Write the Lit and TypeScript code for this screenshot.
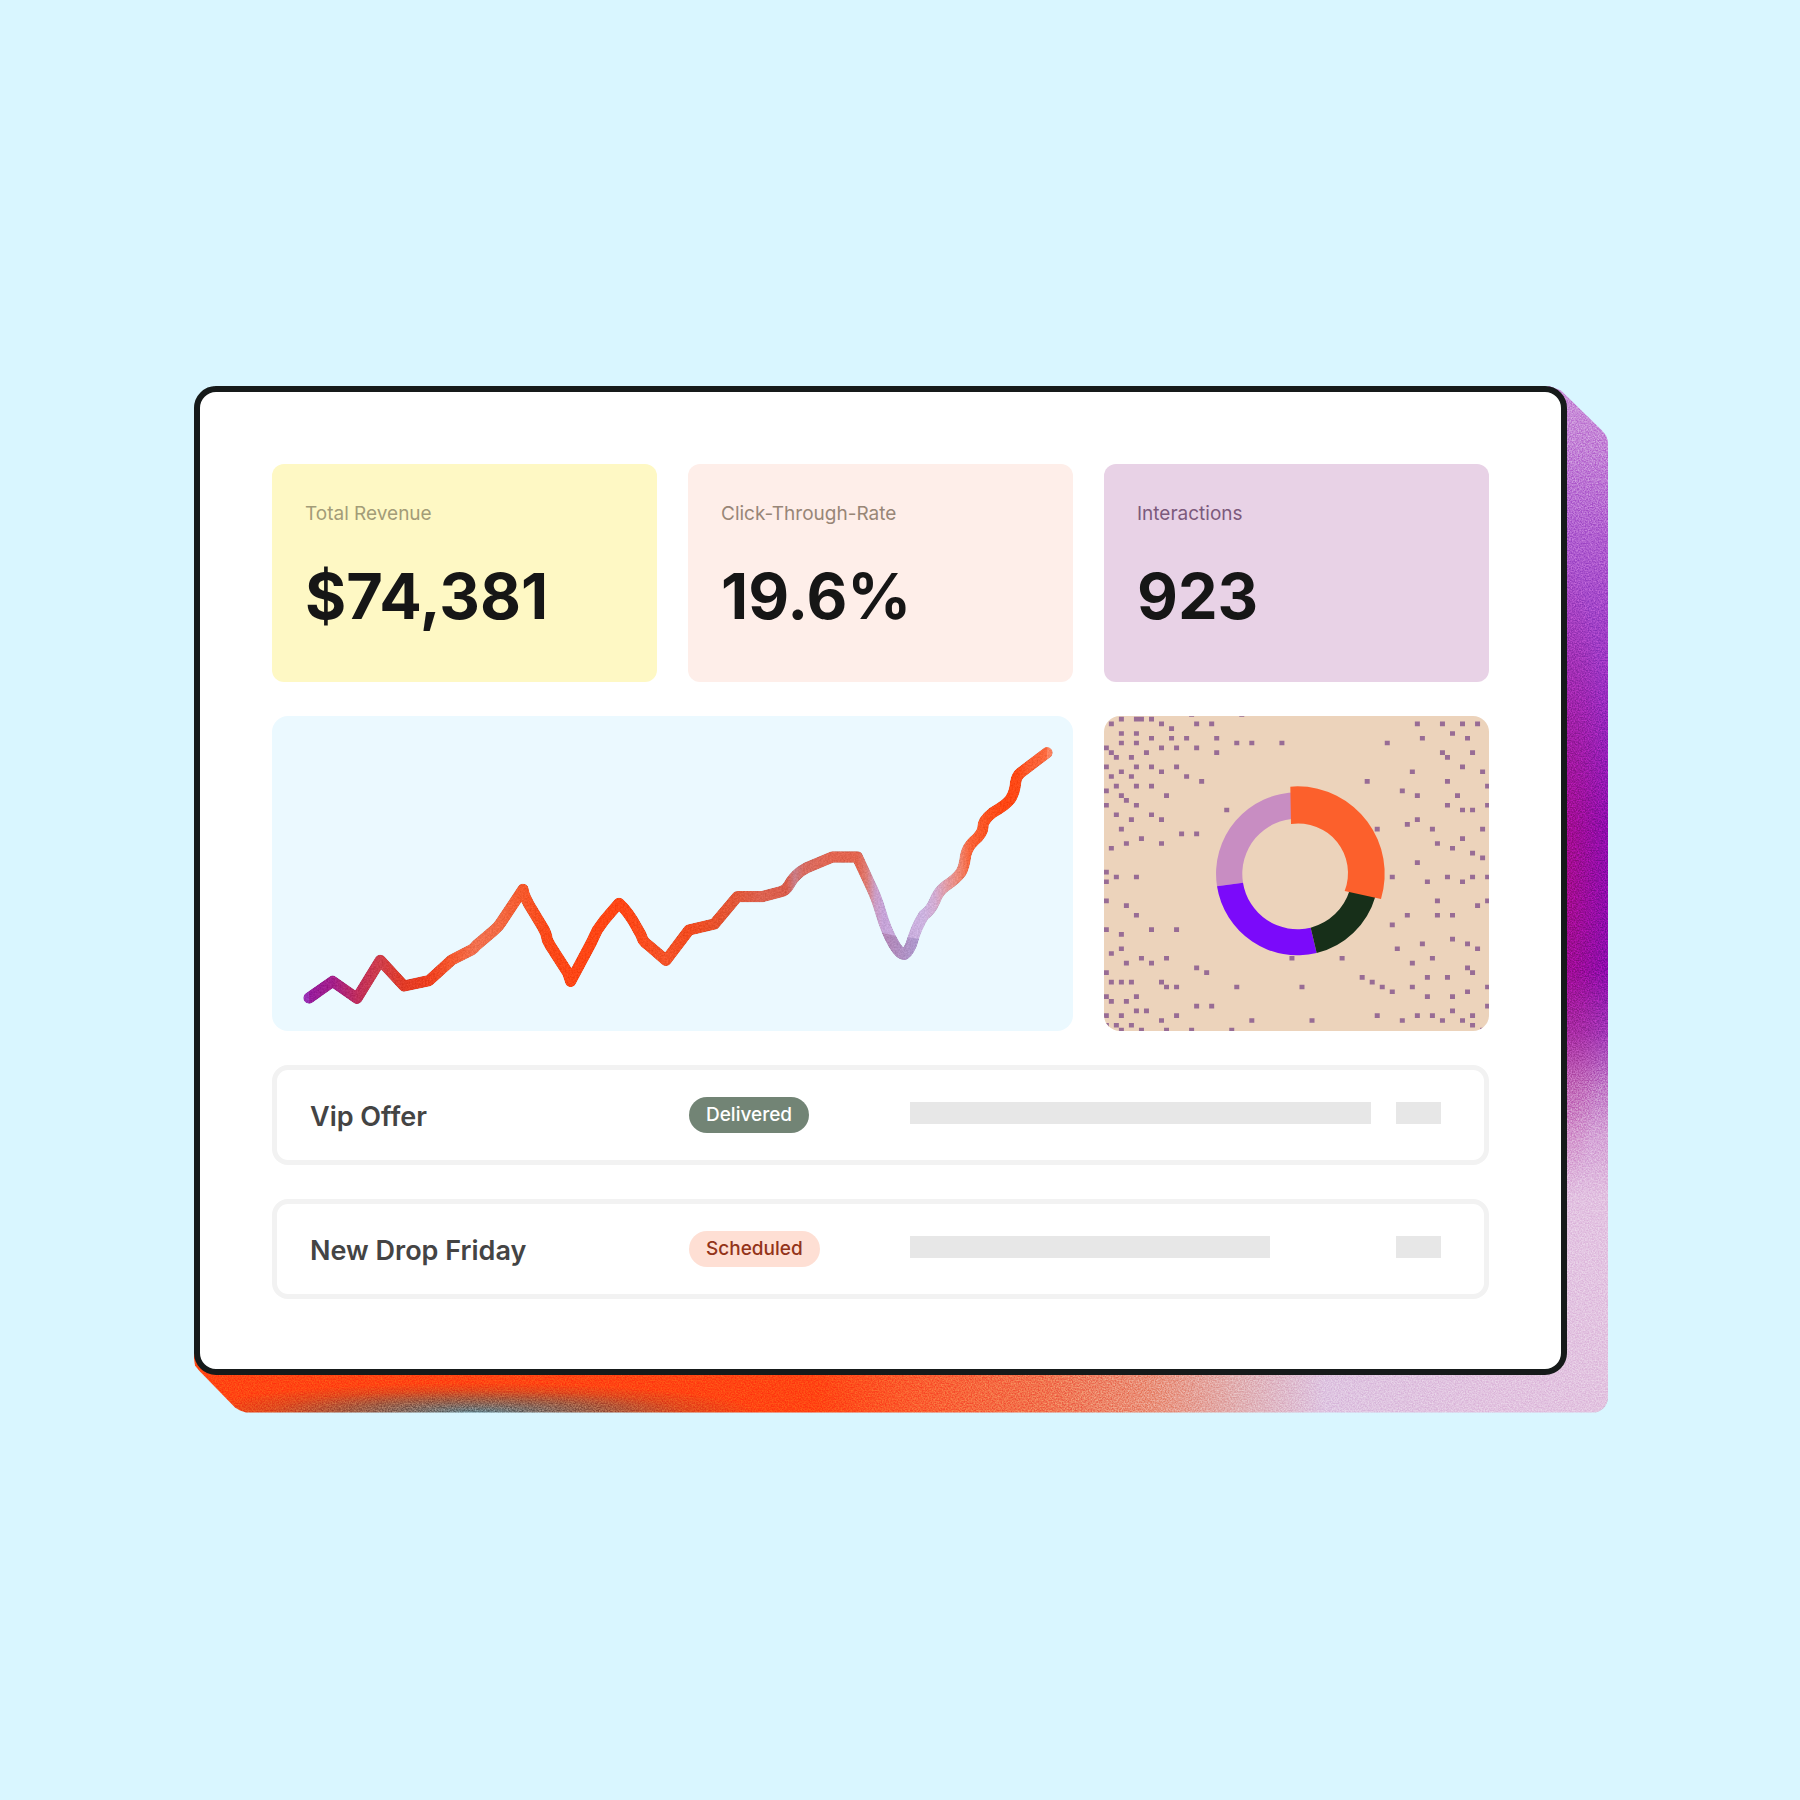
import { LitElement, html, css, svg } from "lit";
import { customElement, property } from "lit/decorators.js";

const metrics = [
  { label: "Total Revenue", value: "$74,381", tone: "yellow" },
  { label: "Click-Through-Rate", value: "19.6%", tone: "peach" },
  { label: "Interactions", value: "923", tone: "lilac" },
];

const campaigns = [
  { name: "Vip Offer", status: "Delivered", progress: 100 },
  { name: "New Drop Friday", status: "Scheduled", progress: 78 },
];

@customElement("metric-card")
export class MetricCard extends LitElement {
  @property() label = "";
  @property() value = "";
  @property() tone = "yellow";

  static styles = css`
    :host {
      display: block;
    }
    .card {
      box-sizing: border-box;
      height: 100%;
      padding: 38px 33px 50px;
      border-radius: 12px;
    }
    .yellow {
      background: #fef8c4;
      color: #a39c78;
    }
    .peach {
      background: #feeee9;
      color: #988677;
    }
    .lilac {
      background: #e8d2e6;
      color: #7c5a7c;
    }
    .label {
      margin: 0;
      font: 400 19px/24px Inter, "Liberation Sans", sans-serif;
    }
    .value {
      margin: 34px 0 0;
      color: #161616;
      font: 700 63px/72px Inter, "Liberation Sans", sans-serif;
    }
  `;

  render() {
    return html`<article class="card ${this.tone}">
      <h2 class="label">${this.label}</h2>
      <p class="value">${this.value}</p>
    </article>`;
  }
}

// Colour stops along the trend line: [x, colour].
const trendStops: [number, string][] = [
  [100, "#9a30b4"],
  [117, "#9a30b4"],
  [118, "#961b9c"],
  [188, "#a31f8a"],
  [261, "#bf2d5c"],
  [331, "#cf3e4a"],
  [402, "#e13b26"],
  [477, "#ee3f1e"],
  [545, "#f4592f"],
  [620, "#f17150"],
  [685, "#f26a44"],
  [759, "#f5582b"],
  [830, "#fa4818"],
  [902, "#fe4615"],
  [1060, "#ff4514"],
  [1188, "#f35329"],
  [1257, "#f24a1e"],
  [1333, "#e7512c"],
  [1402, "#e1583a"],
  [1475, "#dc6250"],
  [1550, "#d95c4a"],
  [1574, "#c97d88"],
  [1600, "#d76c62"],
  [1687, "#e26550"],
  [1762, "#e2644e"],
  [1790, "#dd7d76"],
  [1815, "#cb9ec6"],
  [1840, "#c6a4d8"],
  [1960, "#ccb3e0"],
  [1995, "#d2acd2"],
  [2030, "#e29ba4"],
  [2070, "#ee8570"],
  [2100, "#f86338"],
  [2150, "#fb521f"],
  [2200, "#ff4512"],
  [2245, "#fe4916"],
  [2270, "#fb5a2c"],
  [2330, "#fb6a40"],
  [2331, "#fb8360"],
  [2350, "#fb8360"],
];

const trendPath =
  "M117 864 L188 814 L261 865 L331 751 L402 828 L477 812 L545 750 L606 719 " +
  "Q613 714 619 706 L672 661 Q686 649 692 639 L759 538 " +
  "Q761 553 768 566 Q776 584 788 602 L817 650 Q830 670 832 690 Q840 707 852 724 L893 788 L902 814 " +
  "L965 696 Q973 678 982 660 Q1000 632 1024 606 L1047 580 " +
  "Q1075 605 1102 655 Q1113 672 1119 690 Q1124 698 1138 708 L1188 751 L1257 660 L1333 642 L1402 560 " +
  "L1475 560 L1532 545 Q1548 542 1557 525 Q1574 492 1610 473 L1687 441 L1762 441 " +
  "L1795 512 Q1820 562 1832 606 Q1848 662 1872 703 Q1890 733 1902 733 Q1912 731 1924 703 " +
  "Q1938 652 1961 616 Q1982 602 1994 574 Q2004 545 2027 528 Q2060 506 2073 487 Q2083 470 2087 436 " +
  "Q2093 410 2112 393 Q2138 371 2139 351 Q2138 332 2168 308 Q2208 285 2220 269 Q2234 250 2237 217 Q2240 198 2252 188 L2331 128";

@customElement("trend-chart")
export class TrendChart extends LitElement {
  static styles = css`
    :host {
      display: block;
      background: #ebf9ff;
      border-radius: 16px;
      overflow: hidden;
    }
    .plot {
      display: block;
      width: 100%;
      height: 100%;
    }
    .line {
      fill: none;
      stroke-width: 34px;
      stroke-linecap: round;
      stroke-linejoin: round;
    }
  `;

  render() {
    return html`<svg class="plot" viewBox="6 18 2403 945" role="img" aria-label="Revenue trend">
      <defs>
        <linearGradient id="trend" gradientUnits="userSpaceOnUse" x1="100" y1="0" x2="2350" y2="0">
          ${trendStops.map(
            ([x, color]) => svg`<stop offset=${(x - 100) / 2250} stop-color=${color}></stop>`,
          )}
        </linearGradient>
        <linearGradient id="dip" gradientUnits="userSpaceOnUse" x1="1840" y1="0" x2="1950" y2="0">
          <stop offset="0" stop-color="#b184b4"></stop>
          <stop offset="1" stop-color="#ae9bd0"></stop>
        </linearGradient>
        <clipPath id="below"><path d="M1800 660 L1890 680 L1915 682 L1990 694 V800 H1800 Z"></path></clipPath>
        <filter id="grain" filterUnits="userSpaceOnUse" x="6" y="18" width="2403" height="945" color-interpolation-filters="sRGB">
          <feTurbulence type="fractalNoise" baseFrequency="0.2" numOctaves="2" seed="4"></feTurbulence>
          <feColorMatrix values="1 0 0 0 0  1 0 0 0 0  1 0 0 0 0  0 0 0 0 1"></feColorMatrix>
          <feComposite in="SourceGraphic" operator="arithmetic" k1="0" k2="1" k3="0.16" k4="-0.08"></feComposite>
          <feComposite in2="SourceGraphic" operator="in"></feComposite>
        </filter>
      </defs>
      <g filter="url(#grain)">
        <path class="line" stroke="url(#trend)" d=${trendPath}></path>
        <path class="line" stroke="url(#dip)" clip-path="url(#below)" d=${trendPath}></path>
      </g>
    </svg>`;
  }
}

// Filled cells of the dot texture: each row lists its filled columns.
const dots: Record<number, number[]> = {
  0: [17, 27],
  1: [3, 6, 7, 9],
  2: [1, 11, 18, 21, 62, 67, 71, 74],
  3: [13],
  4: [3, 6, 69],
  5: [9, 13, 16, 22, 63, 72],
  6: [3, 6, 26, 29, 35, 56],
  7: [0, 11, 14, 18],
  8: [1, 8, 22, 67, 73],
  9: [2, 5, 68],
  11: [0, 6, 9, 14, 71],
  12: [3, 11, 61, 75],
  13: [1, 5, 16],
  14: [19, 52, 68],
  15: [2, 6, 9, 76],
  16: [0, 59],
  17: [3, 12, 62, 70],
  18: [4],
  19: [0, 6, 68, 76],
  20: [24, 71, 73],
  21: [2, 9],
  22: [5, 11, 62],
  23: [60],
  24: [3, 54, 65, 75],
  25: [15, 18],
  26: [7, 71],
  27: [4, 11, 66],
  28: [1, 69],
  29: [73],
  30: [75],
  31: [62],
  33: [0],
  34: [2, 6, 57, 68, 73, 76],
  35: [0, 64, 71],
  39: [0, 66, 76],
  40: [4, 74],
  42: [6, 60, 66, 69],
  44: [57],
  45: [0, 9, 14],
  46: [3],
  47: [69],
  48: [63, 72],
  49: [3, 58, 74],
  50: [1],
  51: [7, 12, 37, 47, 65],
  52: [4, 9, 61],
  53: [18, 72],
  54: [0, 20, 73],
  55: [51, 64, 68],
  56: [1, 3, 5, 11, 53],
  57: [12, 14, 26, 39, 55, 61, 76],
  58: [57, 72],
  59: [0, 6, 64, 69],
  60: [1, 4],
  61: [18, 21, 76],
  62: [6, 8, 69],
  63: [0, 3, 14, 54, 62, 65, 73],
  64: [11, 29, 41, 59, 67, 71],
  65: [0, 2, 5, 73],
  66: [3, 7, 12, 17, 25, 75],
};

const dotPath = Object.entries(dots)
  .flatMap(([row, cols]) =>
    cols.map((col) => `M${11.5 + col * 15.05} ${6 + Number(row) * 14.35}h15v14h-15z`),
  )
  .join("");

@customElement("share-chart")
export class ShareChart extends LitElement {
  static styles = css`
    :host {
      display: block;
      background: #ecd3bb;
      border-radius: 16px;
      overflow: hidden;
    }
    .plot {
      display: block;
      width: 100%;
      height: 100%;
    }
  `;

  render() {
    return html`<svg
      class="plot"
      viewBox="12 18 1155 945"
      preserveAspectRatio="xMidYMid slice"
      role="img"
      aria-label="Interaction share"
    >
      <path fill="#986c95" d=${dotPath}></path>
      <path fill="#c88dc2" d="M351 529 A244.5 244.5 0 0 1 592.5 247 V326 A165.6 165.6 0 0 0 429 518 Z"></path>
      <path fill="#7b0afa" d="M650 729 A244.5 244.5 0 0 1 351 529 L429 518 A165.6 165.6 0 0 0 632 653 Z"></path>
      <path fill="#172f19" d="M826 560 A244.5 244.5 0 0 1 650 729 L632 653 A165.6 165.6 0 0 0 749 541 Z"></path>
      <path fill="#fc602c" d="M571 230 Q582 229 592.5 229 A262.5 262.5 0 0 1 843 567 L734 543 A149 149 0 0 0 573 342 Z"></path>
    </svg>`;
  }
}

@customElement("campaign-row")
export class CampaignRow extends LitElement {
  @property() name = "";
  @property() status = "";
  @property({ type: Number }) progress = 100;

  static styles = css`
    :host {
      display: block;
    }
    .row {
      box-sizing: border-box;
      display: grid;
      grid-template-columns: 379fr 221fr 461fr 70px;
      align-items: center;
      min-height: 100px;
      padding: 0 43px 0 33px;
      border: 5px solid #f2f2f2;
      border-radius: 16px;
    }
    .name {
      margin: 0;
      padding-top: 4px;
      color: #444;
      font: 600 27px/36px Inter, "Liberation Sans", sans-serif;
    }
    .pill {
      justify-self: start;
      padding: 0 17px;
      border-radius: 18px;
      font: 500 19px/36px Inter, "Liberation Sans", sans-serif;
    }
    .delivered {
      background: #728475;
      color: #fff;
    }
    .scheduled {
      background: #fedfd4;
      color: #933419;
    }
    .bar,
    .chip {
      height: 22px;
      margin-bottom: 4px;
      background: #e7e7e7;
    }
    .chip {
      margin-left: 25px;
    }
  `;

  render() {
    return html`<div class="row">
      <h3 class="name">${this.name}</h3>
      <span class="pill ${this.status.toLowerCase()}">${this.status}</span>
      <div class="bar" style="width: ${this.progress}%"></div>
      <div class="chip"></div>
    </div>`;
  }
}

@customElement("app-root")
export class AppRoot extends LitElement {
  static styles = css`
    :host {
      box-sizing: border-box;
      display: flex;
      flex-direction: column;
      justify-content: center;
      min-height: 100vh;
      padding: 32px 192px 34px 194px;
      background: #d9f6ff;
    }
    .stage {
      position: relative;
      padding: 0 41px 38px 0;
    }
    /* Extruded side of the panel, seen under its right and bottom edges. */
    .depth {
      position: absolute;
      inset: 0;
      overflow: hidden;
      isolation: isolate;
      border-radius: 16px;
      clip-path: polygon(
        0 20px,
        20px 0,
        calc(100% - 60px) 0,
        calc(100% - 47px) 5px,
        calc(100% - 6px) 45px,
        calc(100% - 2px) 50px,
        100% 56px,
        100% 100%,
        52px 100%,
        46px calc(100% - 2px),
        41px calc(100% - 5px),
        5px calc(100% - 42px),
        1px calc(100% - 47px),
        0 calc(100% - 54px)
      );
      background:
        radial-gradient(44px 320px at calc(100% - 42px) 48%, rgba(196, 10, 104, 0.45), transparent),
        linear-gradient(
            180deg,
            #cc94da,
            #c586d8 6%,
            #b464d2 14%,
            #a648cb 22%,
            #9b2cc0 31%,
            #910fb2 43%,
            #8f0eb0 57%,
            #a338b8 63%,
            #c27cc8 68%,
            #d6a6d8 73%,
            #e3c3e2 79%,
            #e4c6e3 84%,
            #e3c5e1
          )
          right / 60px 100% no-repeat,
        radial-gradient(
            280px 30px at 20% 100%,
            rgba(88, 134, 148, 0.95),
            rgba(116, 108, 96, 0.65) 45%,
            rgba(160, 90, 60, 0.3) 75%,
            transparent
          )
          bottom / 100% 60px no-repeat,
        linear-gradient(
            90deg,
            #ff4713,
            #ff4713 44%,
            #fb5f30 51%,
            #f27650 60%,
            #ea9580 68%,
            #e2b3b6 74%,
            #dfc6e2 80%,
            #e3c5e1 92%
          )
          bottom / 100% 60px no-repeat;
    }
    .grain {
      display: block;
      width: 100%;
      height: 100%;
      opacity: 0.3;
      mix-blend-mode: overlay;
    }
    .panel {
      position: relative;
      display: grid;
      grid-template-columns: repeat(3, 1fr);
      gap: 34px 31px;
      padding: 72px 72px 70px;
      border: 6px solid #161a1a;
      border-radius: 22px;
      background: #fff;
    }
    .trend {
      grid-column: span 2;
    }
    .trend,
    .share {
      height: 315px;
    }
    .campaign {
      grid-column: 1 / -1;
    }
  `;

  render() {
    return html`<main class="stage">
      <div class="depth" aria-hidden="true">
        <svg class="grain">
          <filter id="noise" x="0" y="0" width="100%" height="100%" color-interpolation-filters="sRGB">
            <feTurbulence type="fractalNoise" baseFrequency="0.7" numOctaves="2" seed="7"></feTurbulence>
            <feColorMatrix values="2 0 0 0 -0.55  2 0 0 0 -0.55  2 0 0 0 -0.55  0 0 0 0 1"></feColorMatrix>
          </filter>
          <rect width="100%" height="100%" filter="url(#noise)"></rect>
        </svg>
      </div>
      <section class="panel">
        ${metrics.map(
          (m) => html`<metric-card .label=${m.label} .value=${m.value} .tone=${m.tone}></metric-card>`,
        )}
        <trend-chart class="trend"></trend-chart>
        <share-chart class="share"></share-chart>
        ${campaigns.map(
          (c) => html`<campaign-row
            class="campaign"
            .name=${c.name}
            .status=${c.status}
            .progress=${c.progress}
          ></campaign-row>`,
        )}
      </section>
    </main>`;
  }
}
